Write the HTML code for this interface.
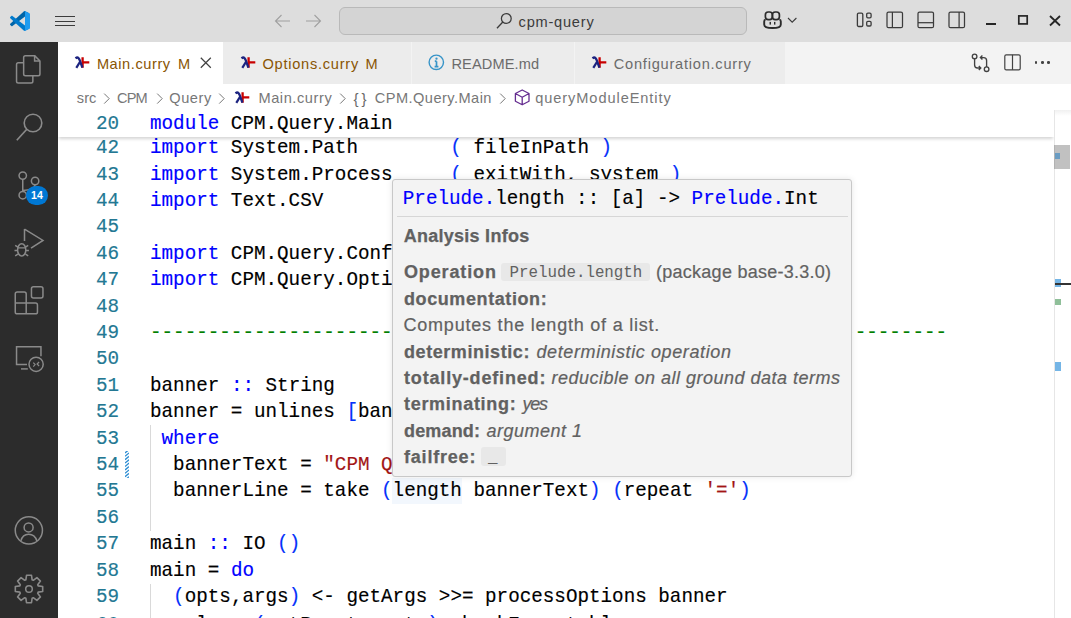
<!DOCTYPE html>
<html><head><meta charset="utf-8"><style>
html,body{margin:0;padding:0;}
body{width:1071px;height:618px;overflow:hidden;position:relative;background:#fff;font-family:'Liberation Sans', sans-serif;}
.t{position:absolute;white-space:pre;line-height:normal;}
.c{-webkit-text-stroke:0.15px currentColor;transform:scaleY(1.06);transform-origin:0 16px;}
.h{-webkit-text-stroke:0.2px currentColor;}
.hb{-webkit-text-stroke:0.25px currentColor;}
.r{position:absolute;box-sizing:content-box;}
svg.r{overflow:visible;}
</style></head><body>
<div class="r" style="left:0px;top:0px;width:1071px;height:42px;background:#dddddd;"></div>
<svg class="r" style="left:10.3px;top:10.6px;" width="20" height="20" viewBox="0 0 100 100"><path d="M96.4614 10.7962L75.8569 0.875542C73.4719 -0.272773 70.6217 0.211611 68.75 2.08333L1.29858 63.5832C-0.515693 65.2373 -0.513607 68.0937 1.30308 69.7452L6.81272 74.754C8.29793 76.1042 10.5347 76.2036 12.1338 74.9905L93.3609 13.3699C96.086 11.3026 100 13.2462 100 16.6667V16.4275C100 14.0265 98.6246 11.8378 96.4614 10.7962Z" fill="#0065A9"/>
<path d="M96.4614 89.2038L75.8569 99.1245C73.4719 100.273 70.6217 99.7884 68.75 97.9167L1.29858 36.4169C-0.515693 34.7627 -0.513607 31.9063 1.30308 30.2548L6.81272 25.246C8.29793 23.8958 10.5347 23.7964 12.1338 25.0095L93.3609 86.6301C96.086 88.6974 100 86.7538 100 83.3334V83.5726C100 85.9735 98.6246 88.1622 96.4614 89.2038Z" fill="#007ACC"/>
<path d="M75.8578 99.1263C73.4721 100.274 70.6219 99.7885 68.75 97.9166C71.0564 100.223 75 98.5895 75 95.3278V4.67213C75 1.41039 71.0564 -0.223106 68.75 2.08329C70.6219 0.211402 73.4721 -0.273666 75.8578 0.873633L96.4587 10.7807C98.6234 11.8217 100 14.0112 100 16.4132V83.5871C100 85.9891 98.6234 88.1786 96.4586 89.2196L75.8578 99.1263Z" fill="#1F9CF0"/></svg>
<div class="r" style="left:55.2px;top:15.700000000000001px;width:19.5px;height:1.2px;background:#3c3c3c;"></div>
<div class="r" style="left:55.2px;top:20.7px;width:19.5px;height:1.2px;background:#3c3c3c;"></div>
<div class="r" style="left:55.2px;top:24.799999999999997px;width:19.5px;height:1.2px;background:#3c3c3c;"></div>
<svg class="r" style="left:274px;top:14px;" width="17" height="14" viewBox="0 0 17 14"><path d="M1.5 7 H16 M7.5 1 L1.5 7 L7.5 13" stroke="#a0a0a0" stroke-width="1.1" fill="none"/></svg>
<svg class="r" style="left:305px;top:14px;" width="17" height="14" viewBox="0 0 17 14"><path d="M1 7 H15.5 M9.5 1 L15.5 7 L9.5 13" stroke="#a0a0a0" stroke-width="1.1" fill="none"/></svg>
<div class="r" style="left:339.2px;top:7px;width:405.5px;height:25.6px;border:1px solid #b9b9b9;border-radius:6px;background:#d4d4d4"></div>
<svg class="r" style="left:496px;top:11.5px;" width="17" height="17" viewBox="0 0 17 17"><circle cx="10.3" cy="6.5" r="4.9" stroke="#3b3b3b" stroke-width="1.25" fill="none"/><path d="M6.8 10 L1 16.2" stroke="#3b3b3b" stroke-width="1.3"/></svg>
<div class="t" style="left:518.60px;top:13.69px;font-size:14.6px;color:#3b3b3b;font-weight:normal;font-style:normal;font-family:'Liberation Sans', sans-serif;letter-spacing:0.769px;">cpm-query</div>
<svg class="r" style="left:762px;top:11px;" width="21" height="18" viewBox="0 0 21 18"><rect x="3.4" y="1.0" width="7" height="7.6" rx="2.8" stroke="#2b2b2b" stroke-width="1.7" fill="none"/>
<rect x="10.4" y="1.0" width="7" height="7.6" rx="2.8" stroke="#2b2b2b" stroke-width="1.7" fill="none"/>
<path d="M3.6 8.6 Q2.2 8.8 2.2 10.4 V13.4 Q2.2 17 10.5 17 Q18.8 17 18.8 13.4 V10.4 Q18.8 8.8 17.4 8.6" stroke="#2b2b2b" stroke-width="1.9" fill="none"/>
<rect x="7.55" y="10.9" width="1.4" height="2.7" fill="#2b2b2b"/><rect x="12.0" y="10.9" width="1.4" height="2.7" fill="#2b2b2b"/></svg>
<svg class="r" style="left:786.5px;top:17px;" width="11" height="7" viewBox="0 0 11 7"><path d="M1 1 L5.2 5.2 L9.4 1" stroke="#3b3b3b" stroke-width="1.1" fill="none"/></svg>
<svg class="r" style="left:856px;top:12px;" width="17" height="16" viewBox="0 0 17 16"><rect x="1.4" y="1.2" width="5.4" height="13.3" rx="1.3" stroke="#3b3b3b" stroke-width="1.3" fill="none"/><rect x="10.7" y="1.2" width="4.4" height="4.6" rx="1.2" stroke="#3b3b3b" stroke-width="1.3" fill="none"/><rect x="10.7" y="9.4" width="4.4" height="4.6" rx="1.2" stroke="#3b3b3b" stroke-width="1.3" fill="none"/></svg>
<svg class="r" style="left:885.5px;top:11px;" width="18" height="18" viewBox="0 0 18 18"><rect x="1" y="1" width="15.5" height="15.7" rx="1.5" stroke="#3b3b3b" stroke-width="1.25" fill="none"/><path d="M6.4 1 V16.7" stroke="#3b3b3b" stroke-width="1.25"/></svg>
<svg class="r" style="left:916.5px;top:11px;" width="18" height="18" viewBox="0 0 18 18"><rect x="1" y="1" width="15.5" height="15.7" rx="1.5" stroke="#3b3b3b" stroke-width="1.25" fill="none"/><path d="M1 11.7 H16.5" stroke="#3b3b3b" stroke-width="1.25"/></svg>
<svg class="r" style="left:948px;top:11px;" width="18" height="18" viewBox="0 0 18 18"><rect x="1" y="1" width="15.5" height="15.7" rx="1.5" stroke="#3b3b3b" stroke-width="1.25" fill="none"/><path d="M11.1 1 V16.7" stroke="#3b3b3b" stroke-width="1.25"/></svg>
<div class="r" style="left:986px;top:22.6px;width:10.2px;height:2.4px;background:#262626;"></div>
<svg class="r" style="left:1017px;top:14px;" width="12" height="12" viewBox="0 0 12 12"><rect x="1.8" y="1.9" width="8.4" height="8.0" stroke="#262626" stroke-width="1.7" fill="none"/></svg>
<svg class="r" style="left:1049px;top:14.5px;" width="12" height="11.5" viewBox="0 0 12 11.5"><path d="M1 1 L11 10.5 M11 1 L1 10.5" stroke="#262626" stroke-width="1.8"/></svg>
<div class="r" style="left:0px;top:42px;width:58px;height:576px;background:#2c2c2c;"></div>
<svg class="r" style="left:14px;top:54px;" width="30" height="31" viewBox="0 0 30 31"><path d="M9.65 3.4 V20 Q9.65 21.75 11.4 21.75 H24.2 Q25.95 21.75 25.95 20 V7 L20.6 1.65 H11.4 Q9.65 1.65 9.65 3.4 Z" stroke="#8a8a8a" stroke-width="1.5" fill="none" stroke-linejoin="round"/><path d="M20.6 1.65 V7 H25.95" stroke="#8a8a8a" stroke-width="1.5" fill="none"/><path d="M9.65 8.75 H4.3 Q2.55 8.75 2.55 10.5 V27.2 Q2.55 28.95 4.3 28.95 H17.1 Q18.85 28.95 18.85 27.2 V21.75" stroke="#8a8a8a" stroke-width="1.5" fill="none"/></svg>
<svg class="r" style="left:14px;top:111px;" width="31" height="32" viewBox="0 0 31 32"><circle cx="19" cy="12" r="8.8" stroke="#8a8a8a" stroke-width="1.6" fill="none"/><path d="M12.8 18.3 L2.8 29.3" stroke="#8a8a8a" stroke-width="1.7"/></svg>
<svg class="r" style="left:15px;top:169px;" width="30" height="33" viewBox="0 0 30 33"><circle cx="7.75" cy="6.6" r="3.7" stroke="#8a8a8a" stroke-width="1.5" fill="none"/><circle cx="20.1" cy="12" r="3.7" stroke="#8a8a8a" stroke-width="1.5" fill="none"/><circle cx="7.75" cy="26.2" r="3.7" stroke="#8a8a8a" stroke-width="1.5" fill="none"/><path d="M7.75 10.3 V22.5 M20.1 15.7 Q20.1 20.5 7.75 21.5" stroke="#8a8a8a" stroke-width="1.5" fill="none"/></svg>
<div class="r" style="left:26px;top:185.6px;width:22px;height:19.5px;border-radius:10px;background:#0078d4"></div>
<div class="t" style="left:26.00px;top:189.31px;font-size:10.6px;color:#ffffff;font-weight:bold;font-style:normal;font-family:'Liberation Sans', sans-serif;letter-spacing:0.000px;width:22px;text-align:center;">14</div>
<svg class="r" style="left:13px;top:227px;" width="32" height="32" viewBox="0 0 32 32"><path d="M11.5 2.1 V14.1 M11.5 2.1 L30 13.4 L18 21.2" stroke="#8a8a8a" stroke-width="1.5" fill="none" stroke-linejoin="miter"/><ellipse cx="8.7" cy="22.9" rx="4.1" ry="6.2" stroke="#8a8a8a" stroke-width="1.5" fill="none"/><path d="M4.6 20.9 H12.8 M2.2 18.4 L4.9 20.2 M15.2 18.4 L12.5 20.2 M1.5 23.5 H4.6 M15.9 23.5 H12.8 M2.2 28.9 L4.9 27.1 M15.2 28.9 L12.5 27.1" stroke="#8a8a8a" stroke-width="1.4" fill="none"/></svg>
<svg class="r" style="left:13px;top:285px;" width="32" height="32" viewBox="0 0 32 32"><path d="M2.25 9 Q2.25 7.05 4.2 7.05 H11.2 Q13.2 7.05 13.2 9 V28.85 M2.25 9 V26.9 Q2.25 28.85 4.2 28.85 H22.5 Q24.45 28.85 24.45 26.9 V20 Q24.45 18 22.5 18 H2.25" stroke="#8a8a8a" stroke-width="1.5" fill="none"/><rect x="18.45" y="1.85" width="11.5" height="11.2" rx="2" stroke="#8a8a8a" stroke-width="1.5" fill="none"/></svg>
<svg class="r" style="left:14px;top:344px;" width="31" height="30" viewBox="0 0 31 30"><path d="M13 20.45 H2.55 V2.85 H26.95 V12.3" stroke="#8a8a8a" stroke-width="1.5" fill="none"/><path d="M7 24.9 H13.8" stroke="#8a8a8a" stroke-width="1.5"/><circle cx="22.1" cy="20.3" r="7.1" stroke="#8a8a8a" stroke-width="1.5" fill="none"/><path d="M19.3 18.6 L21.1 20.6 L19.3 22.6 M25.1 18 L23.1 20 L25.1 22" stroke="#8a8a8a" stroke-width="1.2" fill="none"/></svg>
<svg class="r" style="left:13px;top:514px;" width="33" height="33" viewBox="0 0 33 33"><circle cx="15.85" cy="16.35" r="13.6" stroke="#8a8a8a" stroke-width="1.5" fill="none"/><circle cx="15.6" cy="13.4" r="4.5" stroke="#8a8a8a" stroke-width="1.5" fill="none"/><path d="M7.9 26.9 Q9.6 20.3 15.6 20.3 Q21.8 20.3 23.9 26.9" stroke="#8a8a8a" stroke-width="1.5" fill="none"/></svg>
<svg class="r" style="left:12.75px;top:572.6px;" width="32" height="32" viewBox="0 0 32 32"><path d="M13.51 2.32 L18.49 2.32 L19.14 6.82 L20.27 7.29 L23.91 4.57 L27.43 8.09 L24.71 11.73 L25.18 12.86 L29.68 13.51 L29.68 18.49 L25.18 19.14 L24.71 20.27 L27.43 23.91 L23.91 27.43 L20.27 24.71 L19.14 25.18 L18.49 29.68 L13.51 29.68 L12.86 25.18 L11.73 24.71 L8.09 27.43 L4.57 23.91 L7.29 20.27 L6.82 19.14 L2.32 18.49 L2.32 13.51 L6.82 12.86 L7.29 11.73 L4.57 8.09 L8.09 4.57 L11.73 7.29 L12.86 6.82Z" stroke="#8a8a8a" stroke-width="1.6" fill="none" stroke-linejoin="round"/><circle cx="16" cy="16" r="3.3" stroke="#8a8a8a" stroke-width="1.5" fill="none"/></svg>
<div class="r" style="left:58px;top:42px;width:1013px;height:42px;background:#f3f3f3;"></div>
<div class="r" style="left:58px;top:42px;width:165.3px;height:42px;background:#ffffff;"></div>
<div class="r" style="left:223.3px;top:42px;width:187.3px;height:42px;background:#ececec;"></div>
<div class="r" style="left:411.6px;top:42px;width:162px;height:42px;background:#ececec;"></div>
<div class="r" style="left:574.6px;top:42px;width:210.6px;height:42px;background:#ececec;"></div>
<svg class="r" style="left:74.6px;top:57px;" width="15" height="12" viewBox="0 0 15 12"><path d="M7.6 0.3 V10.7 M8.6 5.45 H14.3" stroke="#c80000" stroke-width="2.3"/><path d="M0.5 1.3 Q2.3 -0.2 3.6 1.2 Q4.2 1.9 4.7 3.2 L7.4 10.7" stroke="#1c2380" stroke-width="2.3" fill="none"/><path d="M5.0 4.8 L1.3 10.8" stroke="#1c2380" stroke-width="2.2"/></svg>
<div class="t" style="left:96.90px;top:55.59px;font-size:14.6px;color:#895503;font-weight:normal;font-style:normal;font-family:'Liberation Sans', sans-serif;letter-spacing:0.572px;">Main.curry</div>
<div class="t" style="left:178.00px;top:55.59px;font-size:14.6px;color:#895503;font-weight:normal;font-style:normal;font-family:'Liberation Sans', sans-serif;letter-spacing:-1.350px;">M</div>
<svg class="r" style="left:200.3px;top:56.5px;" width="12" height="12" viewBox="0 0 12 12"><path d="M0.8 0.8 L10.8 10.8 M10.8 0.8 L0.8 10.8" stroke="#424242" stroke-width="1.25"/></svg>
<svg class="r" style="left:241.2px;top:57px;" width="15" height="12" viewBox="0 0 15 12"><path d="M7.6 0.3 V10.7 M8.6 5.45 H14.3" stroke="#c80000" stroke-width="2.3"/><path d="M0.5 1.3 Q2.3 -0.2 3.6 1.2 Q4.2 1.9 4.7 3.2 L7.4 10.7" stroke="#1c2380" stroke-width="2.3" fill="none"/><path d="M5.0 4.8 L1.3 10.8" stroke="#1c2380" stroke-width="2.2"/></svg>
<div class="t" style="left:262.50px;top:55.59px;font-size:14.6px;color:#895503;font-weight:normal;font-style:normal;font-family:'Liberation Sans', sans-serif;letter-spacing:0.742px;">Options.curry</div>
<div class="t" style="left:365.60px;top:55.59px;font-size:14.6px;color:#895503;font-weight:normal;font-style:normal;font-family:'Liberation Sans', sans-serif;letter-spacing:-0.950px;">M</div>
<svg class="r" style="left:427.5px;top:54px;" width="17" height="17" viewBox="0 0 17 17"><circle cx="8.3" cy="8.3" r="7.2" stroke="#3794c8" stroke-width="1.4" fill="none"/><path d="M8.5 7.2 V12.4 M6.8 7.2 H8.5 M6.6 12.6 H10.4" stroke="#3794c8" stroke-width="1.7"/><circle cx="8.5" cy="4.7" r="1.15" fill="#3794c8"/></svg>
<div class="t" style="left:451.40px;top:55.59px;font-size:14.6px;color:#6b6b6b;font-weight:normal;font-style:normal;font-family:'Liberation Sans', sans-serif;letter-spacing:0.113px;">README.md</div>
<svg class="r" style="left:591.6px;top:57px;" width="15" height="12" viewBox="0 0 15 12"><path d="M7.6 0.3 V10.7 M8.6 5.45 H14.3" stroke="#c80000" stroke-width="2.3"/><path d="M0.5 1.3 Q2.3 -0.2 3.6 1.2 Q4.2 1.9 4.7 3.2 L7.4 10.7" stroke="#1c2380" stroke-width="2.3" fill="none"/><path d="M5.0 4.8 L1.3 10.8" stroke="#1c2380" stroke-width="2.2"/></svg>
<div class="t" style="left:613.80px;top:55.59px;font-size:14.6px;color:#6b6b6b;font-weight:normal;font-style:normal;font-family:'Liberation Sans', sans-serif;letter-spacing:0.764px;">Configuration.curry</div>
<svg class="r" style="left:971px;top:53px;" width="20" height="20" viewBox="0 0 20 20"><circle cx="3.6" cy="3.4" r="2.3" stroke="#424242" stroke-width="1.35" fill="none"/><circle cx="15.6" cy="16.2" r="2.3" stroke="#424242" stroke-width="1.35" fill="none"/><path d="M3.6 5.7 V12 Q3.6 15 6.6 15 H9.6 M7.8 13 L9.8 15 L7.8 17 M15.6 13.9 V7.6 Q15.6 4.6 12.6 4.6 H9.6 M11.4 2.6 L9.4 4.6 L11.4 6.6" stroke="#424242" stroke-width="1.35" fill="none"/></svg>
<svg class="r" style="left:1004px;top:53.5px;" width="17" height="17" viewBox="0 0 17 17"><rect x="0.8" y="0.8" width="15.4" height="15" rx="1.4" stroke="#424242" stroke-width="1.2" fill="none"/><path d="M8.5 0.8 V15.8" stroke="#424242" stroke-width="1.2"/></svg>
<div class="r" style="left:1034.7px;top:61.2px;width:2.6px;height:2.6px;border-radius:50%;background:#424242"></div>
<div class="r" style="left:1041.0px;top:61.2px;width:2.6px;height:2.6px;border-radius:50%;background:#424242"></div>
<div class="r" style="left:1047.3px;top:61.2px;width:2.6px;height:2.6px;border-radius:50%;background:#424242"></div>
<div class="t" style="left:76.80px;top:90.29px;font-size:14.6px;color:#777777;font-weight:normal;font-style:normal;font-family:'Liberation Sans', sans-serif;letter-spacing:0.075px;">src</div>
<svg class="r" style="left:103.3px;top:92.5px;" width="8" height="12" viewBox="0 0 8 12"><path d="M1.2 0.6 L6.2 5.6 L1.2 10.6" stroke="#777777" stroke-width="1.0" fill="none"/></svg>
<div class="t" style="left:117.00px;top:90.29px;font-size:14.6px;color:#777777;font-weight:normal;font-style:normal;font-family:'Liberation Sans', sans-serif;letter-spacing:-0.825px;">CPM</div>
<svg class="r" style="left:155.6px;top:92.5px;" width="8" height="12" viewBox="0 0 8 12"><path d="M1.2 0.6 L6.2 5.6 L1.2 10.6" stroke="#777777" stroke-width="1.0" fill="none"/></svg>
<div class="t" style="left:169.20px;top:90.29px;font-size:14.6px;color:#777777;font-weight:normal;font-style:normal;font-family:'Liberation Sans', sans-serif;letter-spacing:0.588px;">Query</div>
<svg class="r" style="left:218.2px;top:92.5px;" width="8" height="12" viewBox="0 0 8 12"><path d="M1.2 0.6 L6.2 5.6 L1.2 10.6" stroke="#777777" stroke-width="1.0" fill="none"/></svg>
<svg class="r" style="left:235.2px;top:91.5px;" width="15" height="12" viewBox="0 0 15 12"><path d="M7.6 0.3 V10.7 M8.6 5.45 H14.3" stroke="#c80000" stroke-width="2.3"/><path d="M0.5 1.3 Q2.3 -0.2 3.6 1.2 Q4.2 1.9 4.7 3.2 L7.4 10.7" stroke="#1c2380" stroke-width="2.3" fill="none"/><path d="M5.0 4.8 L1.3 10.8" stroke="#1c2380" stroke-width="2.2"/></svg>
<div class="t" style="left:258.40px;top:90.29px;font-size:14.6px;color:#777777;font-weight:normal;font-style:normal;font-family:'Liberation Sans', sans-serif;letter-spacing:0.583px;">Main.curry</div>
<svg class="r" style="left:338.8px;top:92.5px;" width="8" height="12" viewBox="0 0 8 12"><path d="M1.2 0.6 L6.2 5.6 L1.2 10.6" stroke="#777777" stroke-width="1.0" fill="none"/></svg>
<div class="t" style="left:353.40px;top:89.92px;font-size:15px;color:#6a6a6a;font-weight:normal;font-style:normal;font-family:'Liberation Sans', sans-serif;letter-spacing:0.000px;">{&#8201;}</div>
<div class="t" style="left:374.70px;top:90.29px;font-size:14.6px;color:#777777;font-weight:normal;font-style:normal;font-family:'Liberation Sans', sans-serif;letter-spacing:0.458px;">CPM.Query.Main</div>
<svg class="r" style="left:499px;top:92.5px;" width="8" height="12" viewBox="0 0 8 12"><path d="M1.2 0.6 L6.2 5.6 L1.2 10.6" stroke="#777777" stroke-width="1.0" fill="none"/></svg>
<svg class="r" style="left:513.5px;top:88.5px;" width="17" height="17" viewBox="0 0 17 17"><path d="M8.2 1 L15 4.5 V12.2 L8.2 15.8 L1.4 12.2 V4.5 Z M1.4 4.5 L8.2 8.2 L15 4.5 M8.2 8.2 V15.8" stroke="#652d90" stroke-width="1.3" fill="none" stroke-linejoin="round"/></svg>
<div class="t" style="left:535.20px;top:90.29px;font-size:14.6px;color:#777777;font-weight:normal;font-style:normal;font-family:'Liberation Sans', sans-serif;letter-spacing:0.919px;">queryModuleEntity</div>
<div class="r" style="left:58px;top:110.4px;width:1013px;height:507.6px;background:#ffffff;"></div>
<div class="r" style="left:392.3px;top:478.1px;width:69.7px;height:26.4px;background:#f2f7fd;"></div>
<div class="r" style="left:150.2px;top:425.29999999999995px;width:1px;height:105.6px;background:#d9d9d9;"></div>
<div class="r" style="left:150.2px;top:583.6999999999999px;width:1px;height:52.8px;background:#d9d9d9;"></div>
<div class="t c" style="left:79.0px;width:40px;text-align:right;top:137.26px;font-size:19.255px;font-family:'Liberation Mono', monospace;color:#237893">42</div>
<div class="t c" style="left:150.0px;top:137.26px;font-size:19.255px;font-family:'Liberation Mono', monospace;white-space:pre"><span style="color:#0000ff">import</span><span style="color:#000000"> System.Path        </span><span style="color:#0431fa">(</span><span style="color:#000000"> fileInPath </span><span style="color:#0431fa">)</span></div>
<div class="t c" style="left:79.0px;width:40px;text-align:right;top:163.66px;font-size:19.255px;font-family:'Liberation Mono', monospace;color:#237893">43</div>
<div class="t c" style="left:150.0px;top:163.66px;font-size:19.255px;font-family:'Liberation Mono', monospace;white-space:pre"><span style="color:#0000ff">import</span><span style="color:#000000"> System.Process     </span><span style="color:#0431fa">(</span><span style="color:#000000"> exitWith, system </span><span style="color:#0431fa">)</span></div>
<div class="t c" style="left:79.0px;width:40px;text-align:right;top:190.06px;font-size:19.255px;font-family:'Liberation Mono', monospace;color:#237893">44</div>
<div class="t c" style="left:150.0px;top:190.06px;font-size:19.255px;font-family:'Liberation Mono', monospace;white-space:pre"><span style="color:#0000ff">import</span><span style="color:#000000"> Text.CSV</span></div>
<div class="t c" style="left:79.0px;width:40px;text-align:right;top:216.46px;font-size:19.255px;font-family:'Liberation Mono', monospace;color:#237893">45</div>
<div class="t c" style="left:150.0px;top:216.46px;font-size:19.255px;font-family:'Liberation Mono', monospace;white-space:pre"></div>
<div class="t c" style="left:79.0px;width:40px;text-align:right;top:242.86px;font-size:19.255px;font-family:'Liberation Mono', monospace;color:#237893">46</div>
<div class="t c" style="left:150.0px;top:242.86px;font-size:19.255px;font-family:'Liberation Mono', monospace;white-space:pre"><span style="color:#0000ff">import</span><span style="color:#000000"> CPM.Query.Configuration</span></div>
<div class="t c" style="left:79.0px;width:40px;text-align:right;top:269.26px;font-size:19.255px;font-family:'Liberation Mono', monospace;color:#237893">47</div>
<div class="t c" style="left:150.0px;top:269.26px;font-size:19.255px;font-family:'Liberation Mono', monospace;white-space:pre"><span style="color:#0000ff">import</span><span style="color:#000000"> CPM.Query.Options</span></div>
<div class="t c" style="left:79.0px;width:40px;text-align:right;top:295.66px;font-size:19.255px;font-family:'Liberation Mono', monospace;color:#237893">48</div>
<div class="t c" style="left:150.0px;top:295.66px;font-size:19.255px;font-family:'Liberation Mono', monospace;white-space:pre"></div>
<div class="t c" style="left:79.0px;width:40px;text-align:right;top:322.06px;font-size:19.255px;font-family:'Liberation Mono', monospace;color:#237893">49</div>
<div class="t c" style="left:150.0px;top:322.06px;font-size:19.255px;font-family:'Liberation Mono', monospace;white-space:pre"><span style="color:#008000">---------------------------------------------------------------------</span></div>
<div class="t c" style="left:79.0px;width:40px;text-align:right;top:348.46px;font-size:19.255px;font-family:'Liberation Mono', monospace;color:#237893">50</div>
<div class="t c" style="left:150.0px;top:348.46px;font-size:19.255px;font-family:'Liberation Mono', monospace;white-space:pre"></div>
<div class="t c" style="left:79.0px;width:40px;text-align:right;top:374.86px;font-size:19.255px;font-family:'Liberation Mono', monospace;color:#237893">51</div>
<div class="t c" style="left:150.0px;top:374.86px;font-size:19.255px;font-family:'Liberation Mono', monospace;white-space:pre"><span style="color:#000000">banner </span><span style="color:#0000ff">::</span><span style="color:#000000"> String</span></div>
<div class="t c" style="left:79.0px;width:40px;text-align:right;top:401.26px;font-size:19.255px;font-family:'Liberation Mono', monospace;color:#237893">52</div>
<div class="t c" style="left:150.0px;top:401.26px;font-size:19.255px;font-family:'Liberation Mono', monospace;white-space:pre"><span style="color:#000000">banner = unlines </span><span style="color:#0431fa">[</span><span style="color:#000000">bannerLine, bannerText, bannerLine</span><span style="color:#0431fa">]</span></div>
<div class="t c" style="left:79.0px;width:40px;text-align:right;top:427.66px;font-size:19.255px;font-family:'Liberation Mono', monospace;color:#237893">53</div>
<div class="t c" style="left:150.0px;top:427.66px;font-size:19.255px;font-family:'Liberation Mono', monospace;white-space:pre"><span style="color:#000000"> </span><span style="color:#0000ff">where</span></div>
<div class="t c" style="left:79.0px;width:40px;text-align:right;top:454.06px;font-size:19.255px;font-family:'Liberation Mono', monospace;color:#237893">54</div>
<div class="t c" style="left:150.0px;top:454.06px;font-size:19.255px;font-family:'Liberation Mono', monospace;white-space:pre"><span style="color:#000000">  bannerText = </span><span style="color:#a31515">"CPM Query Tool (Version of 26/05/24)"</span></div>
<div class="t c" style="left:79.0px;width:40px;text-align:right;top:480.46px;font-size:19.255px;font-family:'Liberation Mono', monospace;color:#237893">55</div>
<div class="t c" style="left:150.0px;top:480.46px;font-size:19.255px;font-family:'Liberation Mono', monospace;white-space:pre"><span style="color:#000000">  bannerLine = take </span><span style="color:#0431fa">(</span><span style="color:#000000">length bannerText</span><span style="color:#0431fa">)</span><span style="color:#000000"> </span><span style="color:#0431fa">(</span><span style="color:#000000">repeat </span><span style="color:#a31515">'='</span><span style="color:#0431fa">)</span></div>
<div class="t c" style="left:79.0px;width:40px;text-align:right;top:506.86px;font-size:19.255px;font-family:'Liberation Mono', monospace;color:#237893">56</div>
<div class="t c" style="left:150.0px;top:506.86px;font-size:19.255px;font-family:'Liberation Mono', monospace;white-space:pre"></div>
<div class="t c" style="left:79.0px;width:40px;text-align:right;top:533.26px;font-size:19.255px;font-family:'Liberation Mono', monospace;color:#237893">57</div>
<div class="t c" style="left:150.0px;top:533.26px;font-size:19.255px;font-family:'Liberation Mono', monospace;white-space:pre"><span style="color:#000000">main </span><span style="color:#0000ff">::</span><span style="color:#000000"> IO </span><span style="color:#0431fa">()</span></div>
<div class="t c" style="left:79.0px;width:40px;text-align:right;top:559.66px;font-size:19.255px;font-family:'Liberation Mono', monospace;color:#237893">58</div>
<div class="t c" style="left:150.0px;top:559.66px;font-size:19.255px;font-family:'Liberation Mono', monospace;white-space:pre"><span style="color:#000000">main = </span><span style="color:#0000ff">do</span></div>
<div class="t c" style="left:79.0px;width:40px;text-align:right;top:586.06px;font-size:19.255px;font-family:'Liberation Mono', monospace;color:#237893">59</div>
<div class="t c" style="left:150.0px;top:586.06px;font-size:19.255px;font-family:'Liberation Mono', monospace;white-space:pre"><span style="color:#000000">  </span><span style="color:#0431fa">(</span><span style="color:#000000">opts,args</span><span style="color:#0431fa">)</span><span style="color:#000000"> &lt;- getArgs &gt;&gt;= processOptions banner</span></div>
<div class="t c" style="left:79.0px;width:40px;text-align:right;top:613.76px;font-size:19.255px;font-family:'Liberation Mono', monospace;color:#237893">60</div>
<div class="t c" style="left:150.0px;top:613.76px;font-size:19.255px;font-family:'Liberation Mono', monospace;white-space:pre"><span style="color:#000000">  unless </span><span style="color:#0431fa">(</span><span style="color:#000000">optRemote opts</span><span style="color:#0431fa">)</span><span style="color:#000000"> checkExecutables</span></div>
<svg style="position:absolute;left:125px;top:451px;overflow:hidden" width="4.1" height="27" viewBox="0 0 4.1 27"><path d="M0 1.90 L4.1 -1.50" stroke="#2b8cd3" stroke-width="1.3"/><path d="M0 5.30 L4.1 1.90" stroke="#2b8cd3" stroke-width="1.3"/><path d="M0 8.70 L4.1 5.30" stroke="#2b8cd3" stroke-width="1.3"/><path d="M0 12.10 L4.1 8.70" stroke="#2b8cd3" stroke-width="1.3"/><path d="M0 15.50 L4.1 12.10" stroke="#2b8cd3" stroke-width="1.3"/><path d="M0 18.90 L4.1 15.50" stroke="#2b8cd3" stroke-width="1.3"/><path d="M0 22.30 L4.1 18.90" stroke="#2b8cd3" stroke-width="1.3"/><path d="M0 25.70 L4.1 22.30" stroke="#2b8cd3" stroke-width="1.3"/><path d="M0 29.10 L4.1 25.70" stroke="#2b8cd3" stroke-width="1.3"/><path d="M0 32.50 L4.1 29.10" stroke="#2b8cd3" stroke-width="1.3"/></svg>
<div class="r" style="left:58px;top:110.4px;width:996px;height:26.4px;background:#ffffff;box-shadow:0 3px 3px -1px rgba(0,0,0,0.17);"></div>
<div class="t c" style="left:79.0px;width:40px;text-align:right;top:112.76px;font-size:19.255px;font-family:'Liberation Mono', monospace;color:#237893">20</div>
<div class="t c" style="left:150.0px;top:112.76px;font-size:19.255px;font-family:'Liberation Mono', monospace;white-space:pre"><span style="color:#0000ff">module</span><span style="color:#000000"> CPM.Query.Main</span></div>
<div class="r" style="left:1054px;top:110.4px;width:17px;height:507.6px;background:#ffffff;"></div>
<div class="r" style="left:1054px;top:110.4px;width:1px;height:507.6px;background:#e6e6e6;"></div>
<div class="r" style="left:1055px;top:110.4px;width:16px;height:6px;background:linear-gradient(rgba(0,0,0,0.06),rgba(0,0,0,0));"></div>
<div class="r" style="left:1054px;top:145px;width:15.8px;height:23.8px;background:rgba(100,100,100,0.4);"></div>
<div class="r" style="left:1054.8px;top:152.6px;width:5.7px;height:6.4px;background:#6a9cc2;"></div>
<div class="r" style="left:1055px;top:278.5px;width:5.5px;height:8.5px;background:#74b5e6;"></div>
<div class="r" style="left:1055px;top:283.3px;width:15.5px;height:2px;background:#333333;"></div>
<div class="r" style="left:1055px;top:298.6px;width:5.5px;height:6.3px;background:#8fbf99;"></div>
<div class="r" style="left:1055px;top:361.8px;width:5.5px;height:9.5px;background:#74b5e6;"></div>
<div class="r" style="left:391.5px;top:179.3px;width:458.5px;height:295.5px;background:#f3f3f3;border:1px solid #c8c8c8;border-radius:3px;box-shadow:0 0 6px rgba(0,0,0,0.10)"></div>
<div class="t c" style="left:402.8px;top:187.56px;font-size:19.255px;font-family:'Liberation Mono', monospace;white-space:pre"><span style="color:#0000ff">Prelude.</span><span style="color:#000000">length :: [a] -&gt; </span><span style="color:#0000ff">Prelude.</span><span style="color:#000000">Int</span></div>
<div class="r" style="left:397px;top:216px;width:451px;height:1px;background:#d6d6d6;"></div>
<div class="t hb" style="left:403.70px;top:226.01px;font-size:18.0px;color:#616161;font-weight:bold;font-style:normal;font-family:'Liberation Sans', sans-serif;letter-spacing:0.265px;">Analysis Infos</div>
<div class="t hb" style="left:404.00px;top:262.31px;font-size:18.0px;color:#616161;font-weight:bold;font-style:normal;font-family:'Liberation Sans', sans-serif;letter-spacing:0.862px;">Operation</div>
<div class="r" style="left:501.1px;top:262.7px;width:149px;height:18px;background:#e8e8e8;border-radius:3px"></div>
<div class="t" style="left:509.40px;top:264.01px;font-size:15.84px;color:#616161;font-weight:normal;font-style:normal;font-family:'Liberation Mono', monospace;letter-spacing:0.000px;">Prelude.length</div>
<div class="t h" style="left:656.00px;top:262.31px;font-size:18.0px;color:#616161;font-weight:normal;font-style:normal;font-family:'Liberation Sans', sans-serif;letter-spacing:0.263px;">(package base-3.3.0)</div>
<div class="t hb" style="left:404.00px;top:288.71px;font-size:18.0px;color:#616161;font-weight:bold;font-style:normal;font-family:'Liberation Sans', sans-serif;letter-spacing:0.592px;">documentation:</div>
<div class="t h" style="left:403.50px;top:315.11px;font-size:18.0px;color:#616161;font-weight:normal;font-style:normal;font-family:'Liberation Sans', sans-serif;letter-spacing:0.784px;">Computes the length of a list.</div>
<div class="t hb" style="left:404.00px;top:341.61px;font-size:18.0px;color:#616161;font-weight:bold;font-style:normal;font-family:'Liberation Sans', sans-serif;letter-spacing:0.565px;">deterministic:</div>
<div class="t h" style="left:536.50px;top:341.61px;font-size:18.0px;color:#616161;font-weight:normal;font-style:italic;font-family:'Liberation Sans', sans-serif;letter-spacing:0.605px;">deterministic operation</div>
<div class="t hb" style="left:404.00px;top:368.01px;font-size:18.0px;color:#616161;font-weight:bold;font-style:normal;font-family:'Liberation Sans', sans-serif;letter-spacing:0.827px;">totally-defined:</div>
<div class="t h" style="left:551.60px;top:368.01px;font-size:18.0px;color:#616161;font-weight:normal;font-style:italic;font-family:'Liberation Sans', sans-serif;letter-spacing:0.495px;">reducible on all ground data terms</div>
<div class="t hb" style="left:404.00px;top:394.41px;font-size:18.0px;color:#616161;font-weight:bold;font-style:normal;font-family:'Liberation Sans', sans-serif;letter-spacing:0.700px;">terminating:</div>
<div class="t h" style="left:522.45px;top:394.41px;font-size:18.0px;color:#616161;font-weight:normal;font-style:italic;font-family:'Liberation Sans', sans-serif;letter-spacing:-1.225px;">yes</div>
<div class="t hb" style="left:404.00px;top:420.81px;font-size:18.0px;color:#616161;font-weight:bold;font-style:normal;font-family:'Liberation Sans', sans-serif;letter-spacing:0.167px;">demand:</div>
<div class="t h" style="left:486.60px;top:420.81px;font-size:18.0px;color:#616161;font-weight:normal;font-style:italic;font-family:'Liberation Sans', sans-serif;letter-spacing:0.472px;">argument 1</div>
<div class="t hb" style="left:404.00px;top:447.21px;font-size:18.0px;color:#616161;font-weight:bold;font-style:normal;font-family:'Liberation Sans', sans-serif;letter-spacing:0.800px;">failfree:</div>
<div class="r" style="left:481.4px;top:447.4px;width:24.4px;height:18.2px;background:#e8e8e8;border-radius:3px"></div>
<div class="t" style="left:488.00px;top:449.01px;font-size:15.84px;color:#616161;font-weight:normal;font-style:normal;font-family:'Liberation Mono', monospace;letter-spacing:0.000px;">_</div>
</body></html>
